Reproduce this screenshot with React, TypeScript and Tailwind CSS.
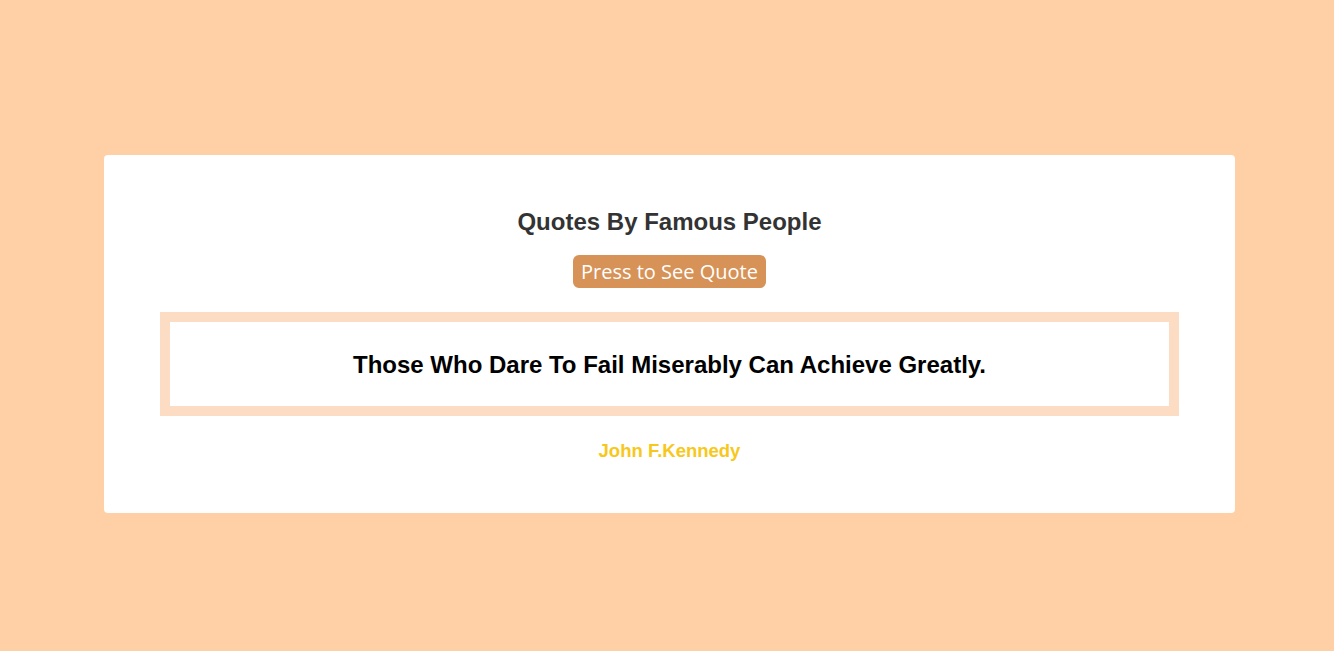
export default function App() {
  return (
    <main className="min-h-screen w-full bg-[#ffcfa6] pt-[155px] pb-[138px]">
      <div className="ml-[104px] w-[1131px] rounded bg-white px-[56px] pt-[52px] pb-[51px] text-center font-['Liberation_Sans',Arial,sans-serif]">
        <h1 className="text-[24px] font-bold leading-[30px] text-[#333333]">
          Quotes By Famous People
        </h1>
        <button className="mt-[18px] rounded-[6px] bg-[#d69257] px-[8px] py-[2px] font-['Open_Sans',sans-serif] text-[20px] leading-[29px] text-white">
          Press to See Quote
        </button>
        <div className="mt-[24px] border-[10px] border-[#fddcc4] pt-[28px] pb-[26px]">
          <p className="text-[24px] font-bold leading-[30px] text-black">
            Those Who Dare To Fail Miserably Can Achieve Greatly.
          </p>
        </div>
        <p className="mt-[24px] text-[18.5px] font-bold leading-[22px] text-[#f7c81b]">
          John F.Kennedy
        </p>
      </div>
    </main>
  );
}
